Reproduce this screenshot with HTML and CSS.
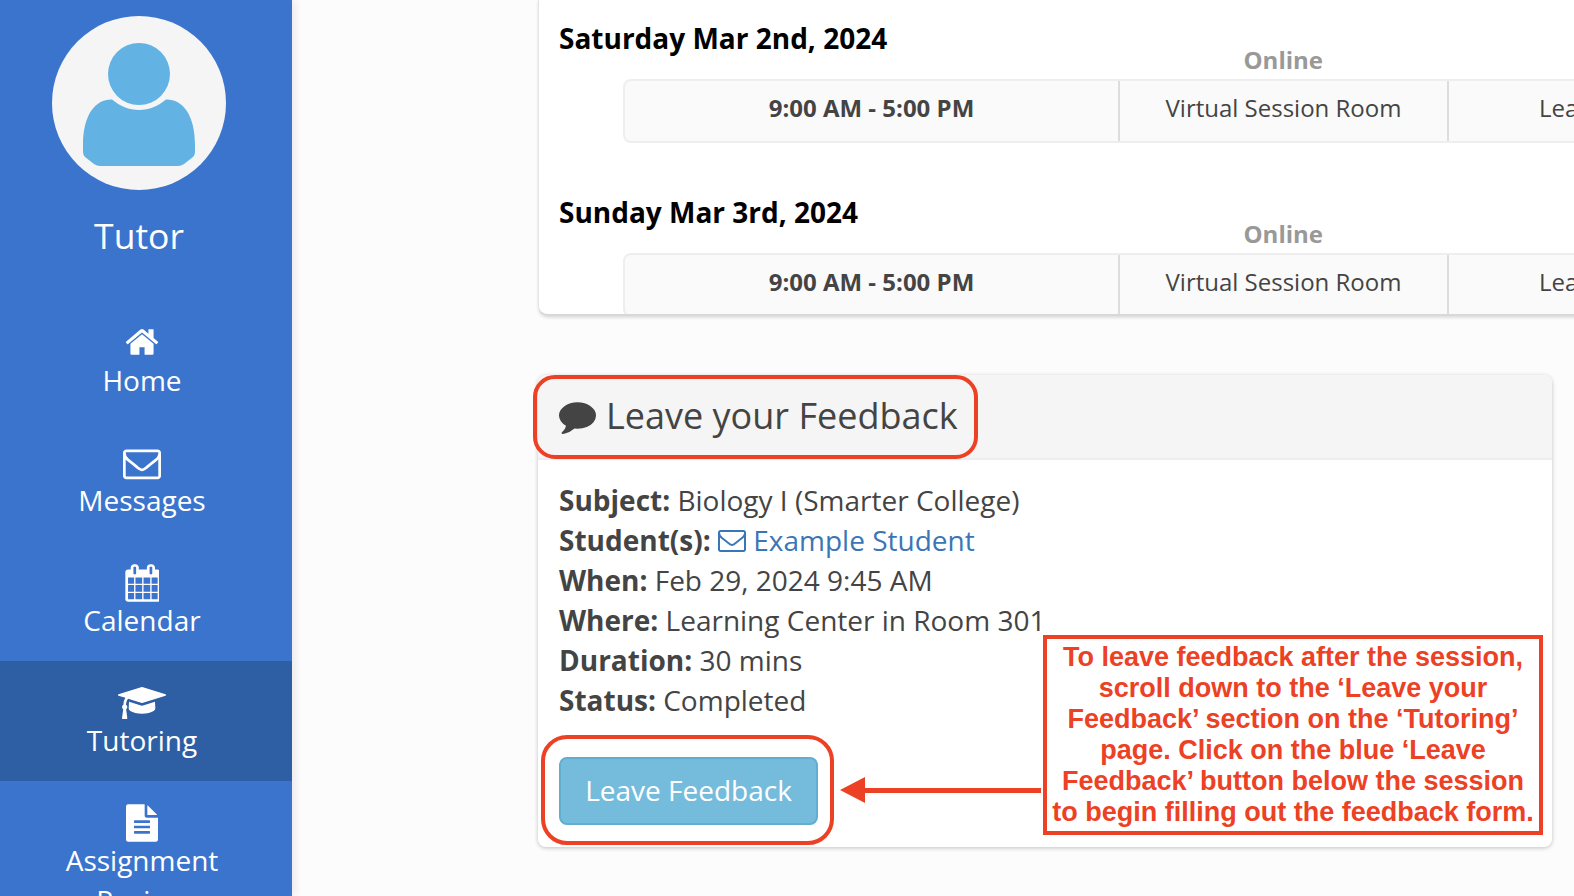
FILE: index.html
```html
<!DOCTYPE html>
<html lang="en">
<head>
<meta charset="utf-8">
<title>Tutoring</title>
<link rel="stylesheet" href="styles.css">
</head>
<body>
<div class="page">
  <aside class="sidebar">
    <div class="profile">
      <div class="avatar">
        <svg viewBox="0 0 174 174" width="174" height="174">
          <circle cx="87" cy="58" r="31" fill="#62b3e4"/>
          <path fill="#62b3e4" d="M60 83.5C68 90 77 94 87 94C97 94 106 90 114 83.5C130 83 143 98 143 129V136Q143 139 141 141L132 148Q129 150 126 150H48Q45 150 42 148L33 141Q31 139 31 136V129C31 98 44 83 60 83.5Z"/>
        </svg>
      </div>
      <div class="role">Tutor</div>
    </div>
    <nav class="nav">
      <a class="nav-item">
        <svg class="nav-icon icon-home" viewBox="0 0 1792 1792" width="36" height="36"><path d="M1472 992v480q0 26-19 45t-45 19h-384v-384h-256v384h-384q-26 0-45-19t-19-45v-480q0-1 .5-3t.5-3l575-474 575 474q1 2 1 6zm223-69l-62 74q-8 9-21 11h-3q-13 0-21-7l-692-577-692 577q-12 8-24 7-13-2-21-11l-62-74q-8-10-7-23.5t11-21.5l719-599q32-26 76-26t76 26l244 204v-195q0-14 9-23t23-9h192q14 0 23 9t9 23v408l219 182q10 8 11 21.5t-7 23.5z"/></svg>
        <span>Home</span>
      </a>
      <a class="nav-item">
        <svg class="nav-icon icon-mail" viewBox="0 0 1792 1792" width="38" height="38"><path d="M1664 1504v-768q-32 36-69 66-268 206-426 338-51 43-83 67t-86.5 48.5-102.5 24.5h-2q-48 0-102.5-24.5t-86.5-48.5-83-67q-158-132-426-338-37-30-69-66v768q0 13 9.5 22.5t22.5 9.5h1472q13 0 22.5-9.5t9.5-22.5zm0-1051v-24.5l-.5-13-3-12.5-5.5-9-9-7.5-14-2.5h-1472q-13 0-22.5 9.5t-9.5 22.5q0 168 147 284 193 152 401 317 6 5 35 29.5t46 37.5 44.5 31.5 50.5 27.5 43 9h2q20 0 43-9t50.5-27.5 44.5-31.5 46-37.5 35-29.5q208-165 401-317 54-43 100.5-115.5t46.5-131.5zm128-37v1088q0 66-47 113t-113 47h-1472q-66 0-113-47t-47-113v-1088q0-66 47-113t113-47h1472q66 0 113 47t47 113z"/></svg>
        <span>Messages</span>
      </a>
      <a class="nav-item">
        <svg class="nav-icon icon-cal" viewBox="0 0 1664 1792" width="35" height="38"><path d="M192 1664h288v-288h-288v288zm352 0h320v-288h-320v288zm-352-352h288v-320h-288v320zm352 0h320v-320h-320v320zm-352-384h288v-288h-288v288zm736 736h320v-288h-320v288zm-384-736h320v-288h-320v288zm768 736h288v-288h-288v288zm-384-352h320v-320h-320v320zm-352-864v-288q0-13-9.500-22.500t-22.500-9.500h-64q-13 0-22.500 9.500t-9.500 22.500v288q0 13 9.500 22.500t22.500 9.500h64q13 0 22.500-9.500t9.500-22.500zm736 864h288v-320h-288v320zm-384-384h320v-288h-320v288zm384 0h288v-288h-288v288zm32-480v-288q0-13-9.500-22.500t-22.500-9.500h-64q-13 0-22.500 9.500t-9.500 22.500v288q0 13 9.500 22.500t22.500 9.500h64q13 0 22.500-9.500t9.500-22.500zm384-64v1280q0 52-38 90t-90 38h-1408q-52 0-90-38t-38-90v-1280q0-52 38-90t90-38h128v-96q0-66 47-113t113-47h64q66 0 113 47t47 113v96h384v-96q0-66 47-113t113-47h64q66 0 113 47t47 113v96h128q52 0 90 38t38 90z"/></svg>
        <span>Calendar</span>
      </a>
      <a class="nav-item active">
        <svg class="nav-icon icon-cap" viewBox="0 0 2304 1792" width="48" height="40"><path d="M1774 836l18 316q4 69-82 128t-235 93.500-323 34.500-323-34.500-235-93.500-82-128l18-316 574 181q22 7 48 7t48-7zm530-324q0 23-22 31l-1120 352q-4 1-10 1t-10-1l-652-206q-43 34-71 111.500t-34 178.500q63 36 63 109 0 69-58 107l58 433q2 14-8 25-9 11-24 11h-192q-15 0-24-11-10-11-8-25l58-433q-58-38-58-107 0-73 65-111 11-207 98-330l-333-104q-22-8-22-31t22-31l1120-352q4-1 10-1t10 1l1120 352q22 8 22 31z"/></svg>
        <span>Tutoring</span>
      </a>
      <a class="nav-item">
        <svg class="nav-icon icon-file" viewBox="128 0 1536 1792" width="32" height="38"><path d="M1596 476q14 14 28 36h-472v-472q22 14 36 28zm-476 164h544v1056q0 40-28 68t-68 28h-1344q-40 0-68-28t-28-68v-1600q0-40 28-68t68-28h800v544q0 40 28 68t68 28zm160 736v-64q0-14-9-23t-23-9h-704q-14 0-23 9t-9 23v64q0 14 9 23t23 9h704q14 0 23-9t9-23zm0-256v-64q0-14-9-23t-23-9h-704q-14 0-23 9t-9 23v64q0 14 9 23t23 9h704q14 0 23-9t9-23zm0-256v-64q0-14-9-23t-23-9h-704q-14 0-23 9t-9 23v64q0 14 9 23t23 9h704q14 0 23-9t9-23z"/></svg>
        <span>Assignment Review</span>
      </a>
    </nav>
  </aside>

  <main class="main">
    <section class="sessions">
      <div class="day">
        <h4 class="day-title">Saturday Mar 2nd, 2024</h4>
        <div class="mode">Online</div>
        <div class="slot">
          <div class="slot-time">9:00 AM - 5:00 PM</div>
          <div class="slot-room">Virtual Session Room</div>
          <div class="slot-action">Learning</div>
        </div>
      </div>
      <div class="day">
        <h4 class="day-title">Sunday Mar 3rd, 2024</h4>
        <div class="mode">Online</div>
        <div class="slot">
          <div class="slot-time">9:00 AM - 5:00 PM</div>
          <div class="slot-room">Virtual Session Room</div>
          <div class="slot-action">Learning</div>
        </div>
      </div>
    </section>

    <section class="feedback">
      <header class="feedback-head">
        <svg class="comment-icon" viewBox="0 0 1792 1792" width="37" height="37"><path d="M1792 896q0 174-120 321.500t-326 233-450 85.500q-70 0-145-8-198 175-460 242-49 14-114 22-17 2-30.500-9t-17.500-29v-1q-3-4-.5-12t2-10 4.500-9.500l6-9 7-8.500 8-9q7-8 31-34.500t34.500-38 31-39.500 32.500-51 27-59 26-76q-157-89-247.500-220t-90.500-281q0-130 71-248.500t191-204.500 286-136.500 348-50.500 348 50.500 286 136.500 191 204.500 71 248.500z"/></svg>
        <h3 class="feedback-title">Leave your Feedback</h3>
      </header>
      <div class="feedback-body">
        <div><b>Subject:</b> Biology I (Smarter College)</div>
        <div><b>Student(s):</b> <a class="student"><svg class="mail-icon" viewBox="0 0 1792 1792" width="28" height="28"><path d="M1664 1504v-768q-32 36-69 66-268 206-426 338-51 43-83 67t-86.500 48.500-102.500 24.500h-2q-48 0-102.500-24.500t-86.500-48.500-83-67q-158-132-426-338-37-30-69-66v768q0 13 9.500 22.500t22.500 9.500h1472q13 0 22.500-9.500t9.500-22.500zm0-1051v-24.500l-.5-13-3-12.500-5.500-9-9-7.500-14-2.500h-1472q-13 0-22.500 9.500t-9.500 22.500q0 168 147 284 193 152 401 317 6 5 35 29.500t46 37.500 44.500 31.500 50.500 27.500 43 9h2q20 0 43-9t50.500-27.500 44.500-31.500 46-37.500 35-29.500q208-165 401-317 54-43 100.500-115.500t46.500-131.500zm128-37v1088q0 66-47 113t-113 47h-1472q-66 0-113-47t-47-113v-1088q0-66 47-113t113-47h1472q66 0 113 47t47 113z"/></svg> Example Student</a></div>
        <div><b>When:</b> Feb 29, 2024 9:45 AM</div>
        <div><b>Where:</b> Learning Center in Room 301</div>
        <div><b>Duration:</b> 30 mins</div>
        <div><b>Status:</b> Completed</div>
        <button class="leave-btn" type="button">Leave Feedback</button>
      </div>
      <div class="ring ring-title"></div>
      <div class="ring ring-btn"></div>
      <div class="arrow"><span class="arrow-head"></span><span class="arrow-line"></span></div>
      <div class="callout">To leave feedback after the session,<br>scroll down to the ‘Leave your<br>Feedback’ section on the ‘Tutoring’<br>page. Click on the blue ‘Leave<br>Feedback’ button below the session<br>to begin filling out the feedback form.</div>
    </section>
  </main>
</div>
</body>
</html>
```

FILE: styles.css
```css
* { box-sizing: border-box; }
html, body { margin: 0; height: 100%; overflow: hidden; }
body { background: #fcfcfc; color: #444; font-family: "Open Sans", sans-serif; font-size: 28px; line-height: 40px; }
.page { display: flex; height: 896px; overflow: hidden; }

.sidebar { flex: 0 0 292px; height: 896px; overflow: hidden; background: #3a74cd; color: #fff; box-shadow: 3px 0 8px rgba(0,0,0,.08); position: relative; z-index: 1; }
.profile { width: 278px; padding-top: 16px; display: flex; flex-direction: column; align-items: center; }
.avatar { width: 174px; height: 174px; border-radius: 50%; background: #f5f5f5; }
.avatar svg { display: block; }
.role { font-size: 35.500px; line-height: 50px; margin-top: 20px; margin-bottom: 1px; }
.nav { margin-top: 40px; }
.nav-item { display: flex; flex-direction: column; align-items: center; height: 120px; padding: 21px 8px 0 0; color: #fff; text-align: center; }
.nav-item.active { background: #2e5ea3; }
.nav-icon { fill: #fff; flex: none; }
.icon-home { margin: 2px 0; }
.icon-mail { margin: 2px 0 0; }
.icon-cal { margin: 2px 0 0 -2px; }
.icon-cap { margin: 1px 0 -1px; }
.icon-file { margin: 2px 0 0; }
.nav-item span { display: block; width: 200px; line-height: 40px; margin-top: -2px; }

.main { flex: 1; min-width: 0; padding-left: 245px; overflow: hidden; }
.sessions { width: 1100px; height: 316px; margin-left: 1px; padding-left: 20px; overflow: hidden; background: #fff; border-left: 1px solid #e4e4e4; border-bottom: 2px solid #d8d8d8; border-radius: 0 0 0 10px; box-shadow: 0 2px 3px rgba(0,0,0,.12); }
.day { height: 174px; padding-top: 18px; }
.day-title { margin: 0; font-size: 28px; line-height: 40px; font-weight: 700; color: #000; }
.mode { width: 764px; margin: -16px 0 1px 0; text-align: right; font-size: 24px; line-height: 36px; font-weight: 700; color: #999; }
.slot { display: flex; margin-left: 64px; width: 1000px; height: 64px; background: #fafafa; border: 2px solid #eee; border-radius: 8px 0 0 8px; line-height: 53px; font-size: 24px; text-align: center; }
.slot-time { flex: 0 0 495px; font-weight: 700; border-right: 2px solid #ddd; }
.slot-room { flex: 0 0 329px; border-right: 2px solid #ddd; }
.slot-action { flex: 1; text-align: left; padding-left: 90px; }

.feedback { position: relative; width: 1014px; margin: 59px 0 0 1px; background: #fff; border-radius: 8px; box-shadow: 0 1px 4px rgba(0,0,0,.24); }
.feedback-head { display: flex; align-items: center; gap: 10px; height: 85px; padding: 0 0 2px 21px; background: #f5f5f5; border-bottom: 2px solid #eee; border-radius: 8px 8px 0 0; }
.comment-icon { fill: #444; flex: none; }
.feedback-title { margin: 0; font-size: 36px; line-height: 40px; font-weight: 400; color: #444; }
.feedback-body { padding: 20px 21px 22px; }
.feedback-body b { font-weight: 700; }
.student { color: #3a76b5; }
.mail-icon { fill: #3a76b5; vertical-align: -3px; }
.leave-btn { display: block; width: 259px; height: 68px; margin-top: 37px; padding: 0 0 2px; background: #75bcdc; border: 2px solid #62aed0; border-radius: 8px; color: #fff; font: 400 28px/38px "Open Sans", sans-serif; }

.ring { position: absolute; border: 4px solid #ec4124; border-radius: 22px; }
.ring-title { left: -5px; top: 0; width: 445px; height: 84px; }
.ring-btn { left: 3px; top: 360px; width: 293px; height: 110px; border-radius: 26px; }
.arrow { position: absolute; left: 302px; top: 402px; width: 201px; height: 26px; display: flex; align-items: center; }
.arrow-head { width: 0; height: 0; border-style: solid; border-width: 13px 25px 13px 0; border-color: transparent #ec4124 transparent transparent; flex: none; }
.arrow-line { flex: 1; height: 5px; background: #ec4124; }
.callout { position: absolute; left: 505px; top: 260px; width: 500px; height: 200px; padding-top: 3px; background: #fff; border: 4px solid #ec4124; color: #ec4124; font: 700 27px/31px "Liberation Sans", Arial, sans-serif; text-align: center; white-space: nowrap; }
```
